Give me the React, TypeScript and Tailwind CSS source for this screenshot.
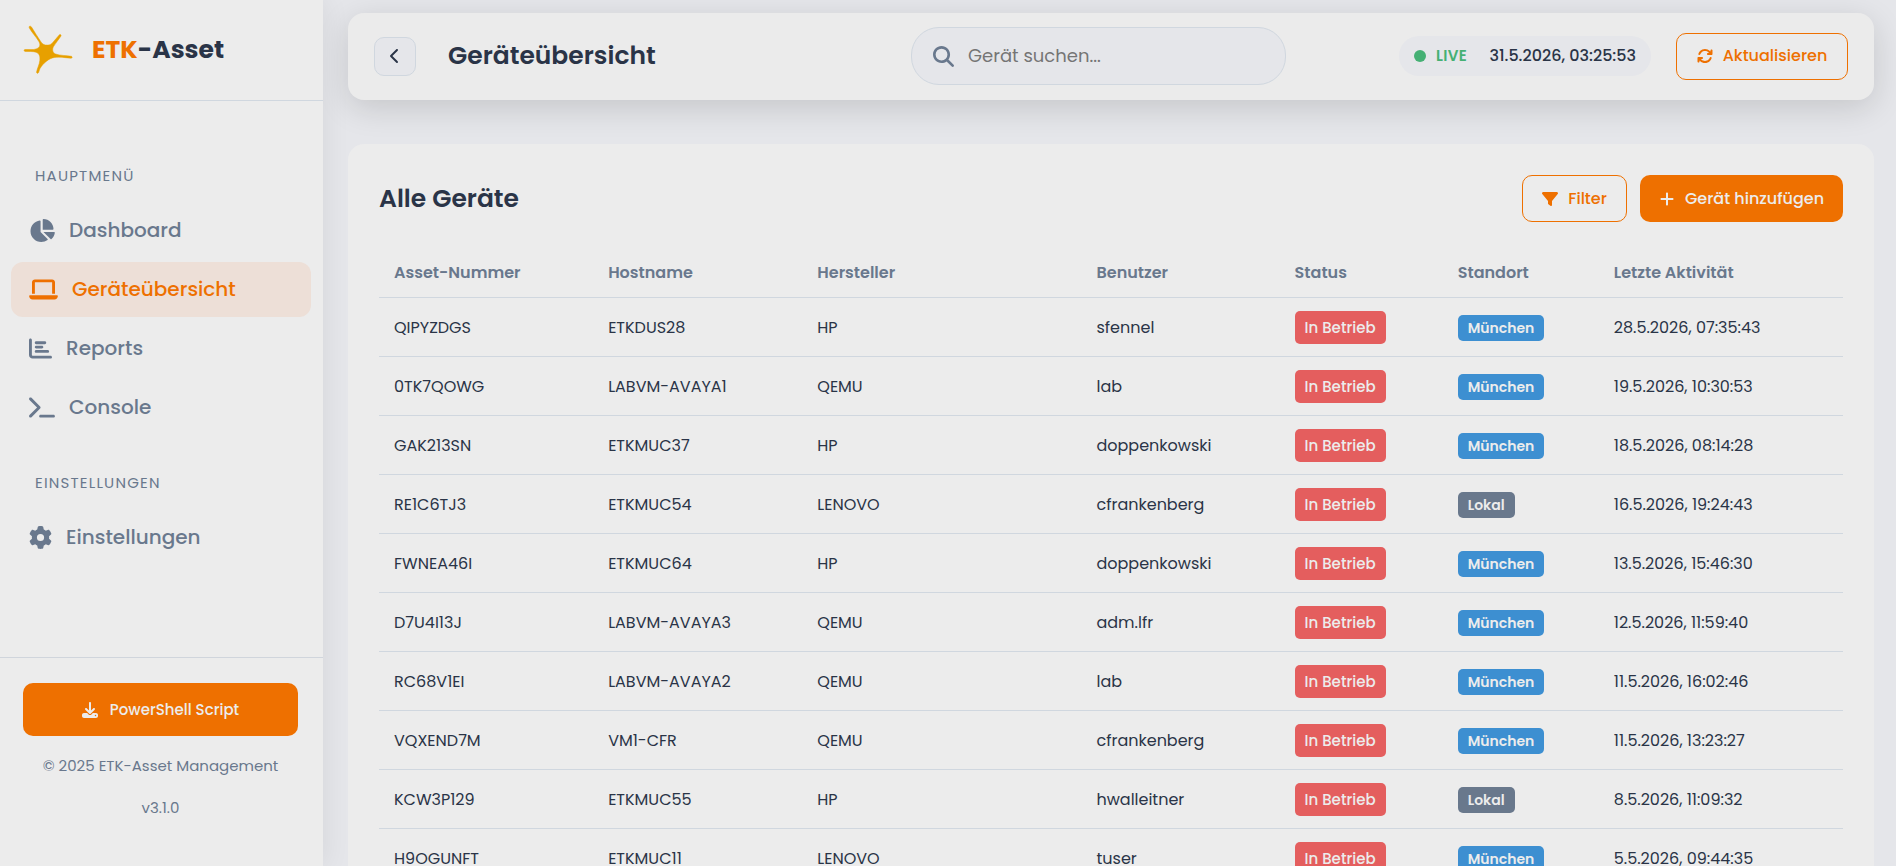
import { useState } from 'react';
import type { ReactNode } from 'react';
import {
   FaArrowsRotate,
   FaChartBar,
   FaChartPie,
   FaChevronLeft,
   FaDownload,
   FaFilter,
   FaGear,
   FaLaptop,
   FaMagnifyingGlass,
   FaPlus,
   FaTerminal,
} from 'react-icons/fa6';

type Device = {
   asset: string;
   host: string;
   vendor: string;
   user: string;
   location: 'München' | 'Lokal';
   lastSeen: string;
};

const devices: Device[] = [
   { asset: 'QIPYZDGS', host: 'ETKDUS28', vendor: 'HP', user: 'sfennel', location: 'München', lastSeen: '28.5.2026, 07:35:43' },
   { asset: '0TK7QOWG', host: 'LABVM-AVAYA1', vendor: 'QEMU', user: 'lab', location: 'München', lastSeen: '19.5.2026, 10:30:53' },
   { asset: 'GAK213SN', host: 'ETKMUC37', vendor: 'HP', user: 'doppenkowski', location: 'München', lastSeen: '18.5.2026, 08:14:28' },
   { asset: 'RE1C6TJ3', host: 'ETKMUC54', vendor: 'LENOVO', user: 'cfrankenberg', location: 'Lokal', lastSeen: '16.5.2026, 19:24:43' },
   { asset: 'FWNEA46I', host: 'ETKMUC64', vendor: 'HP', user: 'doppenkowski', location: 'München', lastSeen: '13.5.2026, 15:46:30' },
   { asset: 'D7U4I13J', host: 'LABVM-AVAYA3', vendor: 'QEMU', user: 'adm.lfr', location: 'München', lastSeen: '12.5.2026, 11:59:40' },
   { asset: 'RC68V1EI', host: 'LABVM-AVAYA2', vendor: 'QEMU', user: 'lab', location: 'München', lastSeen: '11.5.2026, 16:02:46' },
   { asset: 'VQXEND7M', host: 'VM1-CFR', vendor: 'QEMU', user: 'cfrankenberg', location: 'München', lastSeen: '11.5.2026, 13:23:27' },
   { asset: 'KCW3P129', host: 'ETKMUC55', vendor: 'HP', user: 'hwalleitner', location: 'Lokal', lastSeen: '8.5.2026, 11:09:32' },
   { asset: 'H9OGUNFT', host: 'ETKMUC11', vendor: 'LENOVO', user: 'tuser', location: 'München', lastSeen: '5.5.2026, 09:44:35' },
];

const columns = [
   { label: 'Asset-Nummer', width: 'w-[214px]' },
   { label: 'Hostname', width: 'w-[209px]' },
   { label: 'Hersteller', width: 'w-[279px]' },
   { label: 'Benutzer', width: 'w-[198px]' },
   { label: 'Status', width: 'w-[163px]' },
   { label: 'Standort', width: 'w-[156px]' },
   { label: 'Letzte Aktivität', width: 'w-[244px]' },
];

const Logo = () => (
   <svg viewBox="0 0 48 48" className="size-12 shrink-0 overflow-visible" fill="#e7a000" stroke="#e7a000" strokeWidth="0.5" aria-hidden="true">
      <path d="M5.2 0.6C6 -0.2 7 0.2 7.5 1C10.8 6.4 13.5 10.6 16.5 15.2C18.4 18.4 20.6 19.2 23.3 19.1C26 19 27.4 18.2 29 16.2L35.4 8.8C36.1 8.1 37.6 9 37 10C34.5 14 31.5 17 29.4 20.8C28 23.6 28.6 26.8 31.6 28C36 29.6 42 29.4 47.4 30.3C48.6 30.7 48.3 32.3 47 32.2C41.6 31.8 36 30.7 30.6 31.4C25 32.2 19 37.2 16 42.6C15 44.5 15 46.6 14 47.2C13 47.6 12.4 46.8 12.6 45.8C13.4 42 15.4 38.6 15.8 34.6C16.2 30.6 15.6 27.6 12 26.2C8.8 25.2 5 25.6 1 25.4C-0.2 25.2 -0.2 23.6 1 23.5C5 23.3 9 24.2 12.6 22.8C16.2 21.2 16.6 18.6 14.8 15.4C11.8 10.6 7.8 6.4 5.2 1.8Z" />
   </svg>
);

const NavItem = ({ icon, label, active }: { icon: ReactNode; label: string; active?: boolean }) => (
   <a
      href="#"
      aria-current={active ? 'page' : undefined}
      className={`flex h-[55px] items-center gap-[14px] rounded-xl px-[18px] pb-px text-xl font-medium ${
         active ? 'bg-[#eddfd7] text-[#ee7000]' : 'text-[#69788d]'
      }`}
   >
      {icon}
      {label}
   </a>
);

const NavTitle = ({ children }: { children: ReactNode }) => (
   <h2 className="mb-[11px] px-6 text-[15px] leading-6 tracking-[0.08em] text-[#69788d]">{children}</h2>
);

const Sidebar = () => (
   <aside className="sticky top-0 z-10 flex h-screen w-[323px] shrink-0 flex-col bg-[#ececec] shadow-[4px_0_24px_rgba(0,0,0,0.06)]">
      <div className="flex h-[101px] shrink-0 items-center gap-5 border-b border-[#d0d7df] px-6">
         <Logo />
         <span className="text-[25px] font-bold text-[#2a3447]">
            <span className="text-[#ee7000]">ETK</span>-Asset
         </span>
      </div>

      <nav className="flex flex-1 flex-col gap-1 pl-[11px] pr-3 pt-[63px]">
         <NavTitle>HAUPTMENÜ</NavTitle>
         <NavItem icon={<FaChartPie className="h-[23px] w-[26px]" />} label="Dashboard" />
         <NavItem icon={<FaLaptop className="h-[23px] w-[29px]" />} label="Geräteübersicht" active />
         <NavItem icon={<FaChartBar className="h-[23px] w-[23px]" />} label="Reports" />
         <NavItem icon={<FaTerminal className="h-[23px] w-[26px]" />} label="Console" />
         <div className="h-7" />
         <NavTitle>EINSTELLUNGEN</NavTitle>
         <NavItem icon={<FaGear className="h-[23px] w-[23px]" />} label="Einstellungen" />
      </nav>

      <div className="flex flex-col gap-[18px] border-t border-[#d0d5dc] pb-[46px] pl-[23px] pr-[25px] pt-[25px] text-center text-[15px] leading-6 text-[#69788d]">
         <button
            type="button"
            className="flex h-[53px] items-center justify-center gap-3 rounded-[10px] bg-[#ee7000] text-[15px] font-medium text-[#ececec]"
         >
            <FaDownload className="size-4" />
            PowerShell Script
         </button>
         <p>© 2025 ETK-Asset Management</p>
         <p>v3.1.0</p>
      </div>
   </aside>
);

const Topbar = () => {
   const [search, setSearch] = useState('');

   return (
      <header className="grid h-[87px] grid-cols-[537fr_375px_562fr] items-center rounded-2xl bg-[#ebebeb] px-[26px] pb-px shadow-[0_8px_32px_rgba(0,0,0,0.14)]">
         <div className="flex items-center gap-8">
            <button
               type="button"
               aria-label="Zurück"
               className="flex h-[39px] w-[42px] items-center justify-center rounded-[10px] border border-[#d0d7df] bg-[#e5e6ea] text-[#2a3447]"
            >
               <FaChevronLeft className="size-4" />
            </button>
            <h1 className="text-[25px] font-semibold text-[#2a3447]">Geräteübersicht</h1>
         </div>

         <label className="flex h-[58px] items-center gap-[14px] rounded-[28px] border border-[#d0d7df] bg-[#e5e6ea] px-[21px]">
            <FaMagnifyingGlass className="size-[21px] text-[#69788d]" />
            <input
               type="text"
               aria-label="Gerät suchen"
               placeholder="Gerät suchen..."
               value={search}
               onChange={(e) => setSearch(e.target.value)}
               className="min-w-0 flex-1 bg-transparent text-lg outline-none placeholder:text-[#757575]"
            />
         </label>

         <div className="flex items-center justify-end gap-[25px]">
            <div className="flex h-10 w-[252px] items-center rounded-full bg-[#e5e6ea] px-[15px]">
               <span className="size-3 rounded-full bg-[#45b074]" />
               <span className="ml-[10px] text-[15px] font-semibold tracking-wide text-[#45b074]">LIVE</span>
               <span className="ml-auto text-base font-medium text-[#2a3447]">31.5.2026, 03:25:53</span>
            </div>
            <button
               type="button"
               className="flex h-[47px] w-[172px] items-center justify-center gap-[10px] rounded-[10px] border border-[#ee7000] text-base font-medium text-[#ee7000]"
            >
               <FaArrowsRotate className="size-4" />
               Aktualisieren
            </button>
         </div>
      </header>
   );
};

const DeviceTable = () => (
   <table className="mt-6 w-full table-fixed text-left text-base text-[#2a3447]">
      <thead>
         <tr className="h-[51px] border-b border-[#d0d7df] text-[#69788d]">
            {columns.map((c) => (
               <th key={c.label} scope="col" className={`${c.width} px-[15px] pt-1 font-semibold`}>
                  {c.label}
               </th>
            ))}
         </tr>
      </thead>
      <tbody>
         {devices.map((d) => (
            <tr key={d.asset} className="h-[59px] border-b border-[#d0d7df]">
               <td className="px-[15px] pt-[3px]">{d.asset}</td>
               <td className="px-[15px] pt-[3px]">{d.host}</td>
               <td className="px-[15px] pt-[3px]">{d.vendor}</td>
               <td className="px-[15px] pt-[3px]">{d.user}</td>
               <td className="px-[15px] pt-px">
                  <span className="flex h-[33px] w-[91px] items-center justify-center rounded-[5px] bg-[#e45e5e] pt-[2px] text-[15px] font-medium text-[#ececec]">
                     In Betrieb
                  </span>
               </td>
               <td className="px-[15px] pt-[3px]">
                  <span
                     className={`flex h-[26px] w-fit items-center rounded-[5px] px-[10px] text-sm font-semibold text-[#ececec] ${
                        d.location === 'München' ? 'bg-[#3d8fd1]' : 'bg-[#69788c]'
                     }`}
                  >
                     {d.location}
                  </span>
               </td>
               <td className="px-[15px] pt-[3px]">{d.lastSeen}</td>
            </tr>
         ))}
      </tbody>
   </table>
);

const App = () => {
   return (
      <div className="flex min-h-screen bg-[#e5e6ea] font-['Poppins','Inter',sans-serif]">
         <Sidebar />
         <main className="min-w-0 flex-1 pb-6 pl-[25px] pr-[22px] pt-[13px]">
            <Topbar />
            <section className="mt-11 rounded-2xl bg-[#ececec] px-[31px] pb-8 pt-[31px]">
               <div className="flex items-center justify-between">
                  <h2 className="text-[25px] font-semibold text-[#2a3447]">Alle Geräte</h2>
                  <div className="flex gap-[13px]">
                     <button
                        type="button"
                        className="flex h-[47px] w-[105px] items-center justify-center gap-[10px] rounded-[10px] border border-[#ee7000] text-base font-medium text-[#ee7000]"
                     >
                        <FaFilter className="size-4" />
                        Filter
                     </button>
                     <button
                        type="button"
                        className="flex h-[47px] w-[203px] items-center justify-center gap-[10px] rounded-[10px] bg-[#ee7000] text-base font-medium text-[#ececec]"
                     >
                        <FaPlus className="size-4" />
                        Gerät hinzufügen
                     </button>
                  </div>
               </div>
               <DeviceTable />
            </section>
         </main>
      </div>
   );
};

export default App;
